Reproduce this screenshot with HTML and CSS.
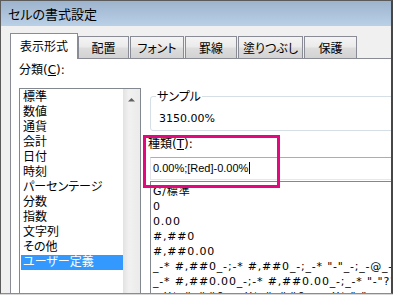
FILE: index.html
```html
<!DOCTYPE html>
<html lang="ja">
<head>
  <meta charset="UTF-8">
  <title>セルの書式設定</title>
  <link rel="stylesheet" href="styles.css">
</head>
<body>
  <div class="frame">
    <div class="titlebar">セルの書式設定</div>

    <div class="tabs">
      <div class="tab active w1">表示形式</div>
      <div class="tab w2">配置</div>
      <div class="tab w3">フォント</div>
      <div class="tab w4">罫線</div>
      <div class="tab w5">塗りつぶし</div>
      <div class="tab w6">保護</div>
    </div>

    <div class="panel">
      <div class="label">分類(<u>C</u>):</div>
      <div class="cols">
        <div class="catlist">
          <div class="items">
            <div class="item">標準</div>
            <div class="item">数値</div>
            <div class="item">通貨</div>
            <div class="item">会計</div>
            <div class="item">日付</div>
            <div class="item">時刻</div>
            <div class="item">パーセンテージ</div>
            <div class="item">分数</div>
            <div class="item">指数</div>
            <div class="item">文字列</div>
            <div class="item">その他</div>
            <div class="item selected">ユーザー定義</div>
          </div>
          <div class="vscroll">
            <svg width="17" height="17" viewBox="0 0 17 17"><polygon points="8.5,9 12,12.5 5,12.5" fill="#606060"/></svg>
          </div>
        </div>

        <div class="right">
          <fieldset class="sample">
            <legend>サンプル</legend>
            <div class="sample-value">3150.00%</div>
          </fieldset>
          <div class="label type-label">種類(<u>T</u>):</div>
          <div class="type-input">0.00%;[Red]-0.00%<span class="caret"></span></div>
          <div class="fmtlist">
            <div>G/標準</div>
            <div>0</div>
            <div>0.00</div>
            <div>#,##0</div>
            <div>#,##0.00</div>
            <div>_-* #,##0_-;-* #,##0_-;_-* "-"_-;_-@_-</div>
            <div>_-* #,##0.00_-;-* #,##0.00_-;_-* "-"??_-;_-@_-</div>
            <div>_-¥* #,##0_-;-¥* #,##0_-;_-¥* "-"_-;_-@_-</div>
          </div>
        </div>
      </div>
    </div>

    <!-- callout round the type box -->
    <div class="callout"></div>
  </div>
</body>
</html>
```

FILE: styles.css
```css
body { margin: 0; background: #d8d8d8; }

.frame {
  width: 393px; height: 294px; box-sizing: border-box;
  border: 1px solid #5b5b5b; border-right: 2px solid #474747; border-bottom-color: #8c8c8c;
  background: #f0f0f0; overflow: hidden; position: relative;
  font-family: "DejaVu Sans", "Noto Sans CJK JP", sans-serif; font-size: 12px; color: #000;
  font-feature-settings: "palt";
}

.titlebar {
  height: 25px; line-height: 25px; padding-left: 7px;
  background: linear-gradient(#9db4cd, #bad0e7);
  font-family: "Noto Sans CJK JP", sans-serif; font-size: 13px;
}

.tabs { display: flex; align-items: flex-end; height: 33px; box-sizing: border-box; padding: 7px 0 0 9px; }
.tab {
  box-sizing: border-box; height: 22px; line-height: 21px; margin: 0 0 1px 1px; text-align: center;
  border: 1px solid #898c95; border-bottom: none;
  background: linear-gradient(#f4f4f4, #ebebeb 45%, #dcdcdc 55%, #d3d3d3);
  font-family: "Noto Sans CJK JP", sans-serif;
}
.tab.active { height: 26px; line-height: 24px; margin-bottom: 0; background: #fff; position: relative; z-index: 1; }
.w1 { width: 68px; margin-left: 0; }
.w2 { width: 51px; margin-left: 0; }
.w3 { width: 54px; }
.w4 { width: 52px; }
.w5 { width: 65px; }
.w6 { width: 53px; }

.panel {
  margin: -1px 0 0 9px; height: 240px; padding: 4px 0 0 8px;
  border-top: 1px solid #898c95; border-left: 1px solid #898c95;
  background: #fff; overflow: hidden;
}

.label { line-height: 15px; margin-bottom: 10px; }
.label u { text-underline-offset: 1px; }

.cols { display: flex; align-items: flex-start; gap: 9px; }

.catlist { display: flex; flex: 0 0 122px; height: 220px; box-sizing: border-box; border: 1px solid #828790; }
.items { flex: 1; padding-top: 1px; }
.item { height: 15px; line-height: 15px; margin-left: 1px; padding-left: 2px; white-space: nowrap; }
.item.selected { background: #3399ff; color: #fff; }
.vscroll { flex: 0 0 17px; background: linear-gradient(to right, #e2e2e2, #f1f1f1 35%, #ebebeb); }
.vscroll svg { display: block; }

.right { flex: 0 0 262px; }

.sample { margin: 1px 0 0; padding: 9px 0 4px 8px; border: 1px solid #d5dfe5; border-radius: 3px; min-width: 0; }
.sample legend { padding: 0 1px; margin-left: -3px; line-height: 14px; font-family: "Noto Sans CJK JP", sans-serif; }
.sample-value { font-size: 11px; line-height: 14px; }

.type-label { line-height: 14px; margin: 6px 0 0 -2px; }

.type-input {
  margin-top: 6px; height: 23px; box-sizing: border-box; padding-left: 2px;
  border: 1px solid; border-color: #abadb3 #dbdfe6 #e3e9ef #e2e3ea;
  font-family: "Liberation Sans", sans-serif; font-size: 11px; line-height: 21px; white-space: nowrap;
}
.caret { display: inline-block; width: 1px; height: 12px; margin-left: 1px; background: #000; vertical-align: -2px; }

.fmtlist { margin-top: 1px; height: 140px; padding-top: 2px; border: 1px solid #828790; font-size: 11px; letter-spacing: 0.8px; }
.fmtlist div { height: 15px; line-height: 15px; padding-left: 2px; white-space: nowrap; }

.callout { position: absolute; left: 142px; top: 134px; width: 137px; height: 53px; box-sizing: border-box; border: 3px solid #e4087f; z-index: 2; }
```
